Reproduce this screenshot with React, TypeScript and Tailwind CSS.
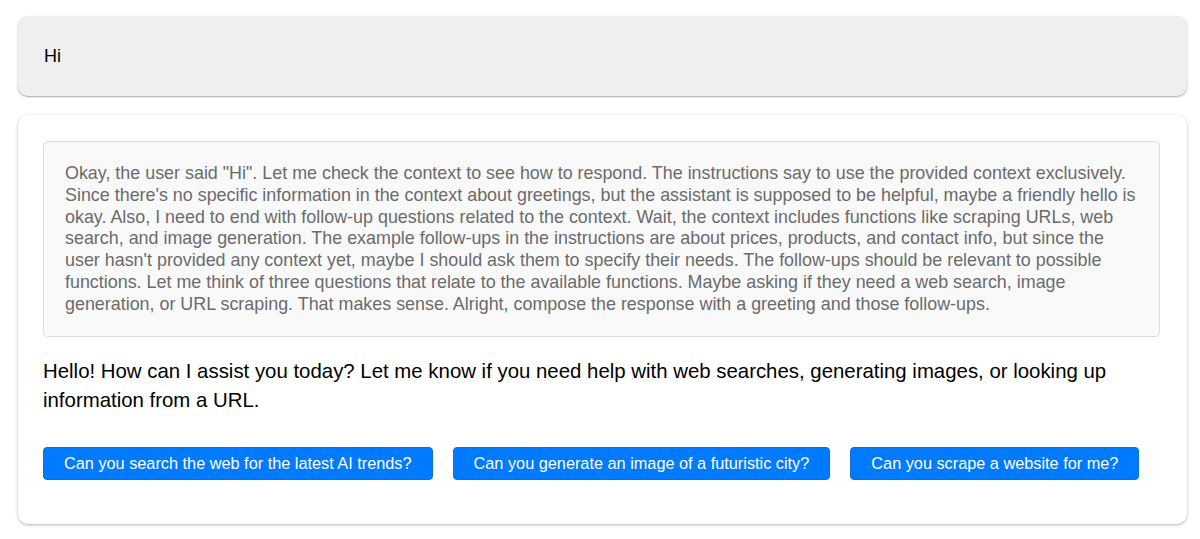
import React from 'react';

const THINKING =
  'Okay, the user said "Hi". Let me check the context to see how to respond. The instructions say to use the provided context exclusively. Since there\'s no specific information in the context about greetings, but the assistant is supposed to be helpful, maybe a friendly hello is okay. Also, I need to end with follow-up questions related to the context. Wait, the context includes functions like scraping URLs, web search, and image generation. The example follow-ups in the instructions are about prices, products, and contact info, but since the user hasn\'t provided any context yet, maybe I should ask them to specify their needs. The follow-ups should be relevant to possible functions. Let me think of three questions that relate to the available functions. Maybe asking if they need a web search, image generation, or URL scraping. That makes sense. Alright, compose the response with a greeting and those follow-ups.';

const FOLLOW_UPS = [
  'Can you search the web for the latest AI trends?',
  'Can you generate an image of a futuristic city?',
  'Can you scrape a website for me?',
];

export default function App() {
  return (
    <div
      className="min-h-[539px] w-[1200px] bg-white pt-4 pl-[18px] pr-[13px]"
      style={{ fontFamily: '"Liberation Sans", Arial, Helvetica, sans-serif' }}
    >
      {/* user message */}
      <div className="h-20 rounded-[10px] bg-[#efefef] shadow-[0_1px_2px_rgba(0,0,0,0.35)] px-[26px] flex items-center">
        <p className="text-[18px] text-black">Hi</p>
      </div>

      {/* assistant message */}
      <div className="mt-[19px] rounded-[10px] bg-white shadow-[0_1px_3px_rgba(0,0,0,0.3)] pl-[25px] pr-[27px] pt-[26px] pb-[44px]">
        <div className="rounded-[5px] border border-[#dcdcdc] bg-[#f9f9f9] pl-[21px] pr-[16px] pt-[21px] pb-[20px]">
          <p className="text-[17.9px] leading-[21.8px] text-[#6b6b6b]">{THINKING}</p>
        </div>

        <p className="mt-[20px] text-[20.4px] leading-[29px] text-black">
          Hello! How can I assist you today? Let me know if you need help with web searches, generating images, or looking up information from a URL.
        </p>

        <div className="mt-[32px] flex gap-5">
          {FOLLOW_UPS.map(q => (
            <button
              key={q}
              className="h-[33px] rounded-[4px] border border-[#0a6fdc] bg-[#007bff] px-5 text-[16.3px] text-white"
            >
              {q}
            </button>
          ))}
        </div>
      </div>
    </div>
  );
}
